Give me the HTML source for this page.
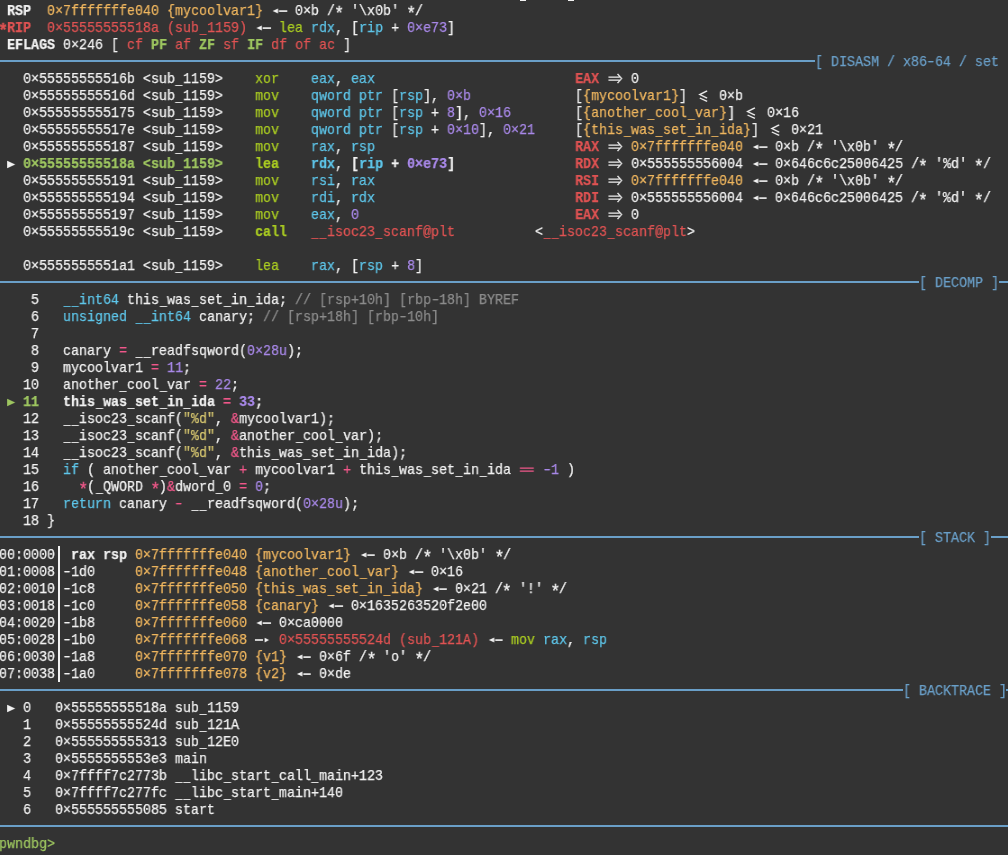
<!DOCTYPE html>
<html><head><meta charset="utf-8"><title>pwndbg</title><style>
html{--fs:14.8px;--sx:0.9009;--ts:0.25px;--ay:3px;}
html,body{margin:0;padding:0;background:#333333;width:1008px;height:855px;overflow:hidden;}
body{position:relative;-webkit-text-stroke:var(--ts) currentColor;font-family:"Liberation Mono",monospace;font-size:var(--fs);color:#f2f2f2;}
.row{position:absolute;left:-1px;height:17px;line-height:17px;white-space:pre;transform:scaleX(var(--sx));transform-origin:0 0;will-change:transform;}
.ic{display:inline-block;vertical-align:top;}
.w2{width:calc(16px / var(--sx));}
.w1{width:calc(8px / var(--sx));}
.b{font-weight:bold;}
.ast{display:inline-block;width:calc(8px / var(--sx));transform:translateY(var(--ay)) scale(1.25);}
.us{display:inline-block;width:calc(8px / var(--sx));transform:translateY(0.8px) scaleX(0.85);}
.hy{display:inline-block;width:calc(8px / var(--sx));transform:scaleX(1.35);}
.sep{position:absolute;height:2px;background:#6a9fc8;}
.ban{position:absolute;height:17px;line-height:17px;white-space:pre;color:#6a9fc8;transform:scaleX(var(--sx));transform-origin:0 0;will-change:transform;}
.vbar{position:absolute;width:2px;background:#f2f2f2;}
.mk{position:absolute;background:#f2f2f2;}
.cw{color:#f2f2f2;}
.co{color:#efb65f;}
.cr{color:#e05353;}
.cg{color:#aacc22;}
.cG{color:#9ec660;}
.cc{color:#5ec6ea;}
.cp{color:#a888e8;}
.cb{color:#6a9fc8;}
.ck{color:#8c8c8c;}
.cm{color:#f0588a;}
.cs{color:#d8c870;}
</style></head>
<body>
<div class="row" style="top:2.5px"> <span class="cw b">RSP</span>  <span class="co">0×7fffffffe040 {mycoolvar1}</span> <svg class="ic w2" height="17" viewBox="0 0 16 17" preserveAspectRatio="none"><path d="M1.5 8.1 L7 5.6 L7 10.6 Z" fill="#f2f2f2"/><rect x="7.8" y="7.3" width="8.4" height="1.6" fill="#f2f2f2"/></svg> <span class="cw">0×b /<span class="ast">*</span> &#x27;\x0b&#x27; <span class="ast">*</span>/</span></div>
<div class="row" style="top:19.5px"><span class="cr b"><span class="ast">*</span>RIP</span>  <span class="cr">0×55555555518a (sub<span class="us">_</span>1159)</span> <svg class="ic w2" height="17" viewBox="0 0 16 17" preserveAspectRatio="none"><path d="M1.5 8.1 L7 5.6 L7 10.6 Z" fill="#f2f2f2"/><rect x="7.8" y="7.3" width="8.4" height="1.6" fill="#f2f2f2"/></svg> <span class="cg">lea</span> <span class="cc">rdx</span>, [<span class="cc">rip</span> + <span class="cp">0×e73</span>]</div>
<div class="row" style="top:36.5px"> <span class="cw b">EFLAGS</span> 0×246 [ <span class="cr">cf</span> <span class="cG b">PF</span> <span class="cr">af</span> <span class="cG b">ZF</span> <span class="cr">sf</span> <span class="cG b">IF</span> <span class="cr">df</span> <span class="cr">of</span> <span class="cr">ac</span> ]</div>
<div class="row" style="top:70.5px">   0×55555555516b &lt;sub<span class="us">_</span>1159&gt;    <span class="cg">xor</span>    <span class="cc">eax</span>, <span class="cc">eax</span>                         <span class="cr b">EAX</span> <svg class="ic w2" height="17" viewBox="0 0 16 17" preserveAspectRatio="none"><path d="M1.3 6.05 H12.3 M1.3 9.1 H12.3 M10.4 2.8 L14.4 7.55 L10.4 12.2" stroke="#f2f2f2" stroke-width="1.3" fill="none"/></svg> 0</div>
<div class="row" style="top:87.5px">   0×55555555516d &lt;sub<span class="us">_</span>1159&gt;    <span class="cg">mov</span>    <span class="cc">qword ptr</span> [<span class="cc">rsp</span>], <span class="cp">0×b</span>             [<span class="co">{mycoolvar1}</span>] <svg class="ic w2" height="17" viewBox="0 0 16 17" preserveAspectRatio="none"><path d="M11.7 2.8 L4.3 6.6 L11.7 10.1 M4.3 10 L11.7 13.4" stroke="#f2f2f2" stroke-width="1.3" fill="none"/></svg> 0×b</div>
<div class="row" style="top:104.5px">   0×555555555175 &lt;sub<span class="us">_</span>1159&gt;    <span class="cg">mov</span>    <span class="cc">qword ptr</span> [<span class="cc">rsp</span> + <span class="cp">8</span>], <span class="cp">0×16</span>        [<span class="co">{another<span class="us">_</span>cool<span class="us">_</span>var}</span>] <svg class="ic w2" height="17" viewBox="0 0 16 17" preserveAspectRatio="none"><path d="M11.7 2.8 L4.3 6.6 L11.7 10.1 M4.3 10 L11.7 13.4" stroke="#f2f2f2" stroke-width="1.3" fill="none"/></svg> 0×16</div>
<div class="row" style="top:121.5px">   0×55555555517e &lt;sub<span class="us">_</span>1159&gt;    <span class="cg">mov</span>    <span class="cc">qword ptr</span> [<span class="cc">rsp</span> + <span class="cp">0×10</span>], <span class="cp">0×21</span>     [<span class="co">{this<span class="us">_</span>was<span class="us">_</span>set<span class="us">_</span>in<span class="us">_</span>ida}</span>] <svg class="ic w2" height="17" viewBox="0 0 16 17" preserveAspectRatio="none"><path d="M11.7 2.8 L4.3 6.6 L11.7 10.1 M4.3 10 L11.7 13.4" stroke="#f2f2f2" stroke-width="1.3" fill="none"/></svg> 0×21</div>
<div class="row" style="top:138.5px">   0×555555555187 &lt;sub<span class="us">_</span>1159&gt;    <span class="cg">mov</span>    <span class="cc">rax</span>, <span class="cc">rsp</span>                         <span class="cr b">RAX</span> <svg class="ic w2" height="17" viewBox="0 0 16 17" preserveAspectRatio="none"><path d="M1.3 6.05 H12.3 M1.3 9.1 H12.3 M10.4 2.8 L14.4 7.55 L10.4 12.2" stroke="#f2f2f2" stroke-width="1.3" fill="none"/></svg> <span class="co">0×7fffffffe040</span> <svg class="ic w2" height="17" viewBox="0 0 16 17" preserveAspectRatio="none"><path d="M1.5 8.1 L7 5.6 L7 10.6 Z" fill="#f2f2f2"/><rect x="7.8" y="7.3" width="8.4" height="1.6" fill="#f2f2f2"/></svg> 0×b /<span class="ast">*</span> &#x27;\x0b&#x27; <span class="ast">*</span>/</div>
<div class="row" style="top:155.5px"> <svg class="ic w1" height="17" viewBox="0 0 8 17" preserveAspectRatio="none"><path d="M-0.2 4.6 L8.2 8.5 L-0.2 12.4 Z" fill="#f2f2f2"/></svg> <span class="cG b">0×55555555518a &lt;sub<span class="us">_</span>1159&gt;</span>    <span class="cg b">lea</span>    <span class="cc b">rdx</span>, <span class="cw b">[</span><span class="cc b">rip</span> <span class="cw b">+</span> <span class="cp b">0×e73</span><span class="cw b">]</span>               <span class="cr b">RDX</span> <svg class="ic w2" height="17" viewBox="0 0 16 17" preserveAspectRatio="none"><path d="M1.3 6.05 H12.3 M1.3 9.1 H12.3 M10.4 2.8 L14.4 7.55 L10.4 12.2" stroke="#f2f2f2" stroke-width="1.3" fill="none"/></svg> 0×555555556004 <svg class="ic w2" height="17" viewBox="0 0 16 17" preserveAspectRatio="none"><path d="M1.5 8.1 L7 5.6 L7 10.6 Z" fill="#f2f2f2"/><rect x="7.8" y="7.3" width="8.4" height="1.6" fill="#f2f2f2"/></svg> 0×646c6c25006425 /<span class="ast">*</span> &#x27;%d&#x27; <span class="ast">*</span>/</div>
<div class="row" style="top:172.5px">   0×555555555191 &lt;sub<span class="us">_</span>1159&gt;    <span class="cg">mov</span>    <span class="cc">rsi</span>, <span class="cc">rax</span>                         <span class="cr b">RSI</span> <svg class="ic w2" height="17" viewBox="0 0 16 17" preserveAspectRatio="none"><path d="M1.3 6.05 H12.3 M1.3 9.1 H12.3 M10.4 2.8 L14.4 7.55 L10.4 12.2" stroke="#f2f2f2" stroke-width="1.3" fill="none"/></svg> <span class="co">0×7fffffffe040</span> <svg class="ic w2" height="17" viewBox="0 0 16 17" preserveAspectRatio="none"><path d="M1.5 8.1 L7 5.6 L7 10.6 Z" fill="#f2f2f2"/><rect x="7.8" y="7.3" width="8.4" height="1.6" fill="#f2f2f2"/></svg> 0×b /<span class="ast">*</span> &#x27;\x0b&#x27; <span class="ast">*</span>/</div>
<div class="row" style="top:189.5px">   0×555555555194 &lt;sub<span class="us">_</span>1159&gt;    <span class="cg">mov</span>    <span class="cc">rdi</span>, <span class="cc">rdx</span>                         <span class="cr b">RDI</span> <svg class="ic w2" height="17" viewBox="0 0 16 17" preserveAspectRatio="none"><path d="M1.3 6.05 H12.3 M1.3 9.1 H12.3 M10.4 2.8 L14.4 7.55 L10.4 12.2" stroke="#f2f2f2" stroke-width="1.3" fill="none"/></svg> 0×555555556004 <svg class="ic w2" height="17" viewBox="0 0 16 17" preserveAspectRatio="none"><path d="M1.5 8.1 L7 5.6 L7 10.6 Z" fill="#f2f2f2"/><rect x="7.8" y="7.3" width="8.4" height="1.6" fill="#f2f2f2"/></svg> 0×646c6c25006425 /<span class="ast">*</span> &#x27;%d&#x27; <span class="ast">*</span>/</div>
<div class="row" style="top:206.5px">   0×555555555197 &lt;sub<span class="us">_</span>1159&gt;    <span class="cg">mov</span>    <span class="cc">eax</span>, <span class="cp">0</span>                           <span class="cr b">EAX</span> <svg class="ic w2" height="17" viewBox="0 0 16 17" preserveAspectRatio="none"><path d="M1.3 6.05 H12.3 M1.3 9.1 H12.3 M10.4 2.8 L14.4 7.55 L10.4 12.2" stroke="#f2f2f2" stroke-width="1.3" fill="none"/></svg> 0</div>
<div class="row" style="top:223.5px">   0×55555555519c &lt;sub<span class="us">_</span>1159&gt;    <span class="cg b">call</span>   <span class="cr"><span class="us">_</span><span class="us">_</span>isoc23<span class="us">_</span>scanf@plt</span>          &lt;<span class="cr"><span class="us">_</span><span class="us">_</span>isoc23<span class="us">_</span>scanf@plt</span>&gt;</div>
<div class="row" style="top:257.5px">   0×5555555551a1 &lt;sub<span class="us">_</span>1159&gt;    <span class="cg">lea</span>    <span class="cc">rax</span>, [<span class="cc">rsp</span> + <span class="cp">8</span>]</div>
<div class="row" style="top:291.5px">    5   <span class="cc"><span class="us">_</span><span class="us">_</span>int64</span> this<span class="us">_</span>was<span class="us">_</span>set<span class="us">_</span>in<span class="us">_</span>ida; <span class="ck">// [rsp+10h] [rbp<span class="hy">-</span>18h] BYREF</span></div>
<div class="row" style="top:308.5px">    6   <span class="cc">unsigned <span class="us">_</span><span class="us">_</span>int64</span> canary; <span class="ck">// [rsp+18h] [rbp<span class="hy">-</span>10h]</span></div>
<div class="row" style="top:325.5px">    7</div>
<div class="row" style="top:342.5px">    8   canary <span class="cm">=</span> <span class="us">_</span><span class="us">_</span>readfsqword(<span class="cp">0×28u</span>);</div>
<div class="row" style="top:359.5px">    9   mycoolvar1 <span class="cm">=</span> <span class="cp">11</span>;</div>
<div class="row" style="top:376.5px">   10   another<span class="us">_</span>cool<span class="us">_</span>var <span class="cm">=</span> <span class="cp">22</span>;</div>
<div class="row" style="top:393.5px"> <svg class="ic w1" height="17" viewBox="0 0 8 17" preserveAspectRatio="none"><path d="M-0.2 4.6 L8.2 8.5 L-0.2 12.4 Z" fill="#9ec660"/></svg> <span class="cG b">11</span>   <span class="cw b">this<span class="us">_</span>was<span class="us">_</span>set<span class="us">_</span>in<span class="us">_</span>ida</span> <span class="cm b">=</span> <span class="cp b">33</span><span class="cw b">;</span></div>
<div class="row" style="top:410.5px">   12   <span class="us">_</span><span class="us">_</span>isoc23<span class="us">_</span>scanf(<span class="cs">&quot;%d&quot;</span>, <span class="cm">&amp;</span>mycoolvar1);</div>
<div class="row" style="top:427.5px">   13   <span class="us">_</span><span class="us">_</span>isoc23<span class="us">_</span>scanf(<span class="cs">&quot;%d&quot;</span>, <span class="cm">&amp;</span>another<span class="us">_</span>cool<span class="us">_</span>var);</div>
<div class="row" style="top:444.5px">   14   <span class="us">_</span><span class="us">_</span>isoc23<span class="us">_</span>scanf(<span class="cs">&quot;%d&quot;</span>, <span class="cm">&amp;</span>this<span class="us">_</span>was<span class="us">_</span>set<span class="us">_</span>in<span class="us">_</span>ida);</div>
<div class="row" style="top:461.5px">   15   <span class="cc">if</span> ( another<span class="us">_</span>cool<span class="us">_</span>var <span class="cm">+</span> mycoolvar1 <span class="cm">+</span> this<span class="us">_</span>was<span class="us">_</span>set<span class="us">_</span>in<span class="us">_</span>ida <svg class="ic w2" height="17" viewBox="0 0 16 17" preserveAspectRatio="none"><path d="M1 6.0 H15 M1 9.0 H15" stroke="#f0588a" stroke-width="1.25" fill="none"/></svg> <span class="cp"><span class="hy">-</span>1</span> )</div>
<div class="row" style="top:478.5px">   16     <span class="cm"><span class="ast">*</span></span>(<span class="us">_</span>QWORD <span class="cm"><span class="ast">*</span></span>)<span class="cm">&amp;</span>dword<span class="us">_</span>0 <span class="cm">=</span> <span class="cp">0</span>;</div>
<div class="row" style="top:495.5px">   17   <span class="cc">return</span> canary <span class="cm"><span class="hy">-</span></span> <span class="us">_</span><span class="us">_</span>readfsqword(<span class="cp">0×28u</span>);</div>
<div class="row" style="top:512.5px">   18 }</div>
<div class="row" style="top:546.5px">00:0000  <span class="cw b">rax rsp</span> <span class="co">0×7fffffffe040 {mycoolvar1}</span> <svg class="ic w2" height="17" viewBox="0 0 16 17" preserveAspectRatio="none"><path d="M1.5 8.1 L7 5.6 L7 10.6 Z" fill="#f2f2f2"/><rect x="7.8" y="7.3" width="8.4" height="1.6" fill="#f2f2f2"/></svg> 0×b /<span class="ast">*</span> &#x27;\x0b&#x27; <span class="ast">*</span>/</div>
<div class="row" style="top:563.5px">01:0008 <span class="hy">-</span>1d0     <span class="co">0×7fffffffe048 {another<span class="us">_</span>cool<span class="us">_</span>var}</span> <svg class="ic w2" height="17" viewBox="0 0 16 17" preserveAspectRatio="none"><path d="M1.5 8.1 L7 5.6 L7 10.6 Z" fill="#f2f2f2"/><rect x="7.8" y="7.3" width="8.4" height="1.6" fill="#f2f2f2"/></svg> 0×16</div>
<div class="row" style="top:580.5px">02:0010 <span class="hy">-</span>1c8     <span class="co">0×7fffffffe050 {this<span class="us">_</span>was<span class="us">_</span>set<span class="us">_</span>in<span class="us">_</span>ida}</span> <svg class="ic w2" height="17" viewBox="0 0 16 17" preserveAspectRatio="none"><path d="M1.5 8.1 L7 5.6 L7 10.6 Z" fill="#f2f2f2"/><rect x="7.8" y="7.3" width="8.4" height="1.6" fill="#f2f2f2"/></svg> 0×21 /<span class="ast">*</span> &#x27;!&#x27; <span class="ast">*</span>/</div>
<div class="row" style="top:597.5px">03:0018 <span class="hy">-</span>1c0     <span class="co">0×7fffffffe058 {canary}</span> <svg class="ic w2" height="17" viewBox="0 0 16 17" preserveAspectRatio="none"><path d="M1.5 8.1 L7 5.6 L7 10.6 Z" fill="#f2f2f2"/><rect x="7.8" y="7.3" width="8.4" height="1.6" fill="#f2f2f2"/></svg> 0×1635263520f2e00</div>
<div class="row" style="top:614.5px">04:0020 <span class="hy">-</span>1b8     <span class="co">0×7fffffffe060</span> <svg class="ic w2" height="17" viewBox="0 0 16 17" preserveAspectRatio="none"><path d="M1.5 8.1 L7 5.6 L7 10.6 Z" fill="#f2f2f2"/><rect x="7.8" y="7.3" width="8.4" height="1.6" fill="#f2f2f2"/></svg> 0×ca0000</div>
<div class="row" style="top:631.5px">05:0028 <span class="hy">-</span>1b0     <span class="co">0×7fffffffe068</span> <svg class="ic w2" height="17" viewBox="0 0 16 17" preserveAspectRatio="none"><rect x="-0.2" y="7.2" width="8.3" height="1.6" fill="#f2f2f2"/><path d="M9.7 5.8 L14.2 8.1 L9.7 10.4 Z" fill="#f2f2f2"/></svg> <span class="cr">0×55555555524d (sub<span class="us">_</span>121A)</span> <svg class="ic w2" height="17" viewBox="0 0 16 17" preserveAspectRatio="none"><path d="M1.5 8.1 L7 5.6 L7 10.6 Z" fill="#f2f2f2"/><rect x="7.8" y="7.3" width="8.4" height="1.6" fill="#f2f2f2"/></svg> <span class="cg">mov</span> <span class="cc">rax</span>, <span class="cc">rsp</span></div>
<div class="row" style="top:648.5px">06:0030 <span class="hy">-</span>1a8     <span class="co">0×7fffffffe070 {v1}</span> <svg class="ic w2" height="17" viewBox="0 0 16 17" preserveAspectRatio="none"><path d="M1.5 8.1 L7 5.6 L7 10.6 Z" fill="#f2f2f2"/><rect x="7.8" y="7.3" width="8.4" height="1.6" fill="#f2f2f2"/></svg> 0×6f /<span class="ast">*</span> &#x27;o&#x27; <span class="ast">*</span>/</div>
<div class="row" style="top:665.5px">07:0038 <span class="hy">-</span>1a0     <span class="co">0×7fffffffe078 {v2}</span> <svg class="ic w2" height="17" viewBox="0 0 16 17" preserveAspectRatio="none"><path d="M1.5 8.1 L7 5.6 L7 10.6 Z" fill="#f2f2f2"/><rect x="7.8" y="7.3" width="8.4" height="1.6" fill="#f2f2f2"/></svg> 0×de</div>
<div class="row" style="top:699.5px"> <svg class="ic w1" height="17" viewBox="0 0 8 17" preserveAspectRatio="none"><path d="M-0.2 4.6 L8.2 8.5 L-0.2 12.4 Z" fill="#f2f2f2"/></svg> 0   0×55555555518a sub<span class="us">_</span>1159</div>
<div class="row" style="top:716.5px">   1   0×55555555524d sub<span class="us">_</span>121A</div>
<div class="row" style="top:733.5px">   2   0×555555555313 sub<span class="us">_</span>12E0</div>
<div class="row" style="top:750.5px">   3   0×5555555553e3 main</div>
<div class="row" style="top:767.5px">   4   0×7ffff7c2773b <span class="us">_</span><span class="us">_</span>libc<span class="us">_</span>start<span class="us">_</span>call<span class="us">_</span>main+123</div>
<div class="row" style="top:784.5px">   5   0×7ffff7c277fc <span class="us">_</span><span class="us">_</span>libc<span class="us">_</span>start<span class="us">_</span>main+140</div>
<div class="row" style="top:801.5px">   6   0×555555555085 start</div>
<div class="row" style="top:835.5px"><span class="cG">pwndbg&gt;</span></div>
<div class="sep" style="top:60.0px;left:0;width:815px"></div>
<div class="ban" style="top:53.5px;left:815px">[ DISASM / x86<span class="hy">-</span>64 / set</div>
<div class="sep" style="top:281.0px;left:0;width:919px"></div>
<div class="ban" style="top:274.5px;left:919px">[ DECOMP ]</div>
<div class="sep" style="top:281.0px;left:999px;width:9px"></div>
<div class="sep" style="top:536.0px;left:0;width:919px"></div>
<div class="ban" style="top:529.5px;left:919px">[ STACK ]</div>
<div class="sep" style="top:536.0px;left:991px;width:17px"></div>
<div class="sep" style="top:689.0px;left:0;width:903px"></div>
<div class="ban" style="top:682.5px;left:903px">[ BACKTRACE ]</div>
<div class="sep" style="top:689.0px;left:1006px;width:2px"></div>
<div class="sep" style="top:825.0px;left:0;width:1008px"></div>
<div class="vbar" style="left:58px;top:545.5px;height:136px"></div>
<div class="mk" style="left:520px;top:0;width:6px;height:1.3px"></div>
<div class="mk" style="left:568px;top:0;width:6px;height:1.3px"></div>
</body></html>
